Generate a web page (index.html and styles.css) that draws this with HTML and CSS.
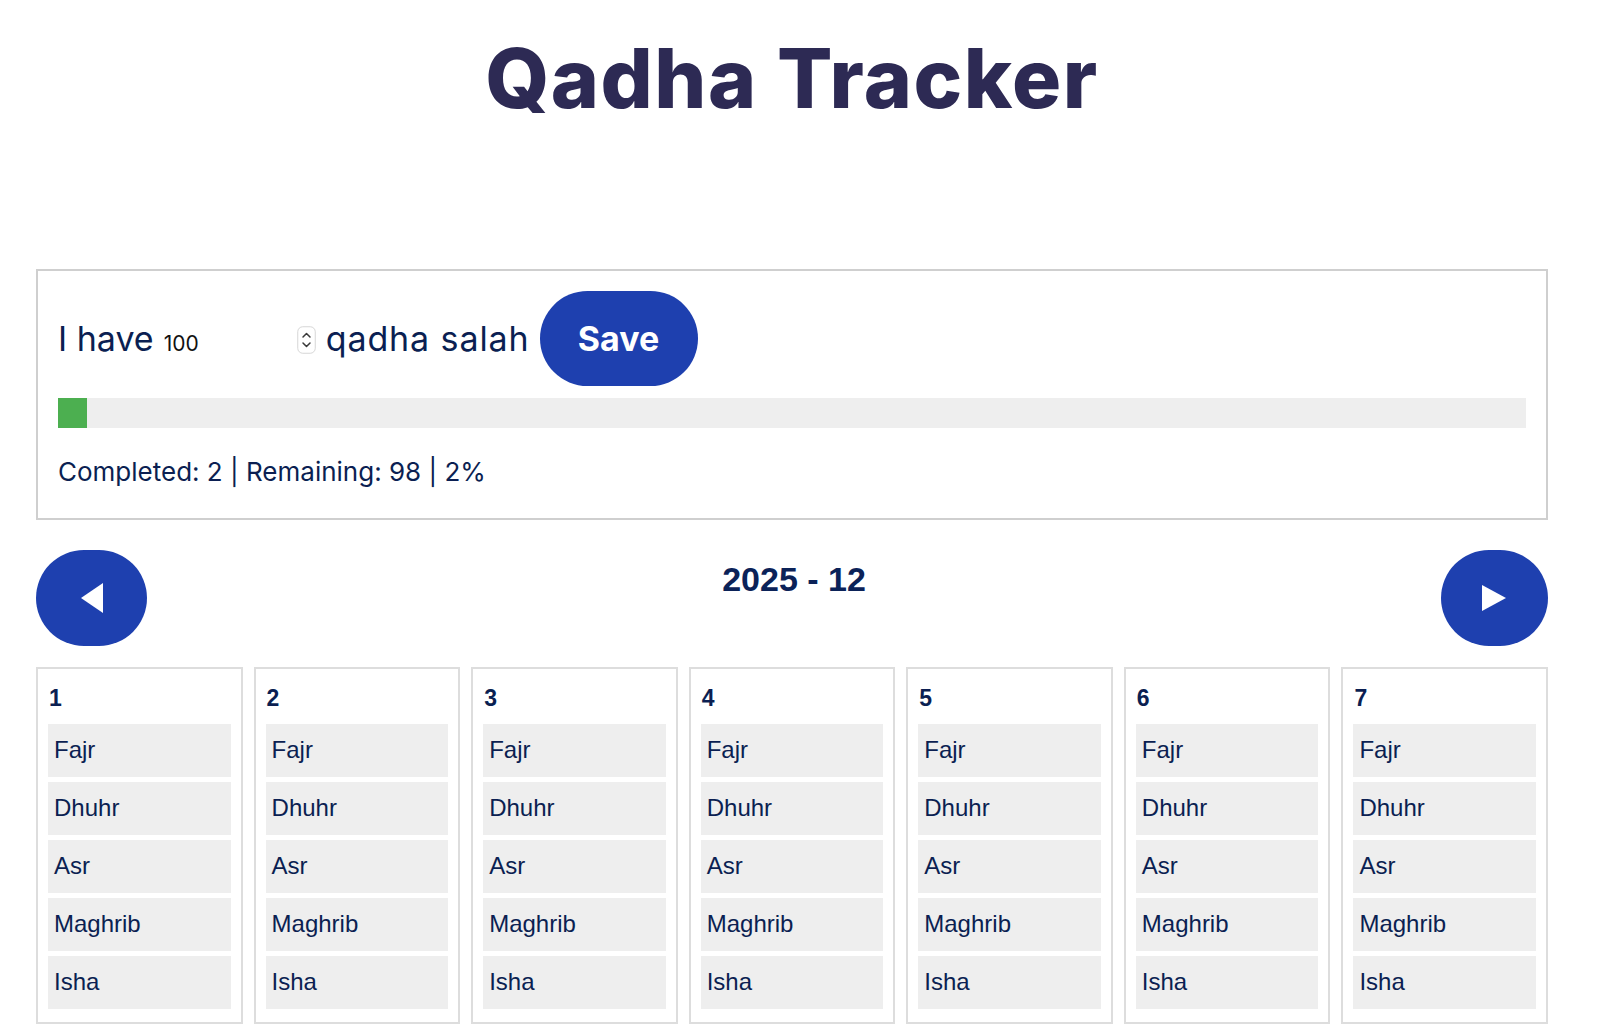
FILE: index.html
```html
<!DOCTYPE html>
<html lang="en">
<head>
<meta charset="utf-8">
<title>Qadha Tracker</title>
<link rel="stylesheet" href="styles.css">
</head>
<body>
<div class="page">
  <h1 class="title">Qadha Tracker</h1>

  <section class="summary">
    <div class="goal-row">
      <span class="goal-text">I have</span>
      <span class="num">
        <input class="num-input" type="text" value="100">
        <svg class="spinner" width="19" height="28" viewBox="0 0 19 28" aria-hidden="true">
          <rect x="0.75" y="0.75" width="17.5" height="26.5" rx="5" fill="#fff" stroke="#d6d6d6" stroke-width="1"/>
          <path d="M6 11 L9.5 7.5 L13 11" fill="none" stroke="#3a3a3a" stroke-width="1.5" stroke-linecap="round" stroke-linejoin="round"/>
          <path d="M6 17 L9.5 20.5 L13 17" fill="none" stroke="#3a3a3a" stroke-width="1.5" stroke-linecap="round" stroke-linejoin="round"/>
        </svg>
      </span>
      <span class="goal-text goal-wide">qadha salah</span>
      <button class="save-btn">Save</button>
    </div>
    <div class="progress"><div class="progress-fill" style="width:2%"></div></div>
    <p class="stats">Completed: 2 | Remaining: 98 | 2%</p>
  </section>

  <nav class="month-nav">
    <button class="nav-btn nav-prev" aria-label="Previous month">
      <svg width="22" height="30" viewBox="0 0 22 30"><polygon points="22,0 22,30 0,15" fill="#fff"/></svg>
    </button>
    <h2 class="month-title">2025 - 12</h2>
    <button class="nav-btn nav-next" aria-label="Next month">
      <svg width="24" height="26" viewBox="0 0 24 26"><polygon points="0,0 24,13 0,26" fill="#fff"/></svg>
    </button>
  </nav>

  <div class="days">
    <div class="day">
      <div class="day-num">1</div>
      <div class="prayer">Fajr</div><div class="prayer">Dhuhr</div><div class="prayer">Asr</div><div class="prayer">Maghrib</div><div class="prayer">Isha</div>
    </div>
    <div class="day">
      <div class="day-num">2</div>
      <div class="prayer">Fajr</div><div class="prayer">Dhuhr</div><div class="prayer">Asr</div><div class="prayer">Maghrib</div><div class="prayer">Isha</div>
    </div>
    <div class="day">
      <div class="day-num">3</div>
      <div class="prayer">Fajr</div><div class="prayer">Dhuhr</div><div class="prayer">Asr</div><div class="prayer">Maghrib</div><div class="prayer">Isha</div>
    </div>
    <div class="day">
      <div class="day-num">4</div>
      <div class="prayer">Fajr</div><div class="prayer">Dhuhr</div><div class="prayer">Asr</div><div class="prayer">Maghrib</div><div class="prayer">Isha</div>
    </div>
    <div class="day">
      <div class="day-num">5</div>
      <div class="prayer">Fajr</div><div class="prayer">Dhuhr</div><div class="prayer">Asr</div><div class="prayer">Maghrib</div><div class="prayer">Isha</div>
    </div>
    <div class="day">
      <div class="day-num">6</div>
      <div class="prayer">Fajr</div><div class="prayer">Dhuhr</div><div class="prayer">Asr</div><div class="prayer">Maghrib</div><div class="prayer">Isha</div>
    </div>
    <div class="day">
      <div class="day-num">7</div>
      <div class="prayer">Fajr</div><div class="prayer">Dhuhr</div><div class="prayer">Asr</div><div class="prayer">Maghrib</div><div class="prayer">Isha</div>
    </div>
  </div>
</div>
</body>
</html>
```

FILE: styles.css
```css
* { box-sizing: border-box; }

html, body {
  margin: 0;
  padding: 0;
  background: #fff;
}

body {
  font-family: Inter, "Noto Sans", sans-serif;
  color: #0b1f52;
}

.page {
  width: 1512px;
  margin-left: 36px;
}

.title {
  margin: 29px 0 140px;
  font-family: Inter, sans-serif;
  font-weight: 800;
  font-size: 82px;
  line-height: 100px;
  text-align: center;
  color: #2d2a54;
  letter-spacing: 1.5px;
}

.summary {
  border: 2px solid #cfcfcf;
  padding: 20px;
}

.goal-row {
  display: flex;
  align-items: baseline;
}

.goal-text {
  font-size: 34px;
  color: #0b1f52;
}

.goal-wide {
  letter-spacing: 0.9px;
}

.num {
  display: inline-flex;
  align-items: center;
  margin-left: 8px;
  margin-right: 10px;
}

.num-input {
  width: 135px;
  border: none;
  outline: none;
  padding: 0 2px;
  font-family: Inter, sans-serif;
  font-size: 21px;
  color: #111;
  background: transparent;
}

.spinner {
  display: block;
  margin-top: -8px;
}

.save-btn {
  margin-left: 10px;
  width: 158px;
  height: 95px;
  border: none;
  border-radius: 48px;
  background: #1e40af;
  color: #fff;
  font-family: Inter, sans-serif;
  font-weight: 700;
  font-size: 34px;
  padding: 0;
}

.progress {
  margin-top: 12px;
  height: 30px;
  background: #eeeeee;
}

.progress-fill {
  height: 100%;
  background: #4caf50;
}

.stats {
  margin: 28px 0 10px;
  font-size: 26px;
  line-height: 32px;
  color: #0b1f52;
}

.month-nav {
  margin-top: 30px;
  display: flex;
  justify-content: space-between;
  align-items: flex-start;
}

.nav-btn {
  height: 96px;
  border: none;
  border-radius: 48px;
  background: #1e40af;
  display: flex;
  align-items: center;
  justify-content: center;
  padding: 0;
}

.nav-btn svg { display: block; }

.nav-prev { width: 111px; }
.nav-next { width: 107px; }

.month-title {
  margin: 10px 0 0;
  font-family: "Liberation Sans", Arial, sans-serif;
  font-weight: 700;
  font-size: 34px;
  line-height: 39px;
  color: #0b2258;
}

.days {
  margin-top: 21px;
  display: grid;
  grid-template-columns: repeat(7, 1fr);
  gap: 11px;
}

.day {
  border: 2px solid #dddddd;
  padding: 16px 10px 13px 10px;
  font-family: "Liberation Sans", Arial, sans-serif;
  display: flex;
  flex-direction: column;
  gap: 5px;
}

.day-num {
  font-weight: 700;
  font-size: 23px;
  line-height: 27px;
  margin-bottom: 7px;
  padding-left: 1px;
  color: #0b1f52;
}

.prayer {
  background: #eeeeee;
  height: 53px;
  padding: 11px 6px 13px;
  font-size: 24px;
  line-height: 29px;
  color: #0b1f52;
}
```
